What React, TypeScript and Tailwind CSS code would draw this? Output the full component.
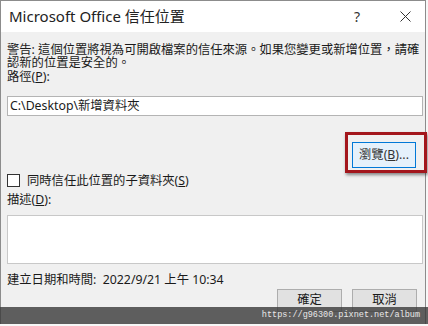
import React from "react";

const font = { fontFamily: '"Noto Sans", "Noto Sans CJK TC", sans-serif' };

export default function App() {
  return (
    <div className="relative h-[326px] w-[428px] overflow-hidden bg-[#f7f7f7]" style={font}>
      {/* dialog window */}
      <div className="flex h-[324px] w-[426px] flex-col border-x border-t border-[#8c8c8c] bg-[#f0f0f0] text-[12.3px] text-[#1a1a1a]">
        {/* title bar */}
        <div className="flex h-[31px] shrink-0 items-center bg-white pl-[8px]">
          <span className="text-[15px] text-[#222]">Microsoft Office 信任位置</span>
          <span className="ml-auto mr-[40px] text-[14px] text-[#333]">?</span>
          <svg className="mr-[14px]" width="11" height="11" viewBox="0 0 11 11">
            <path d="M0.5 0.5 L10.5 10.5 M10.5 0.5 L0.5 10.5" stroke="#333" strokeWidth="1" fill="none" />
          </svg>
        </div>

        {/* body */}
        <div className="flex flex-col px-[6px]">
          <p className="mt-[11px] whitespace-nowrap leading-[13px]">
            警告: 這個位置將視為可開啟檔案的信任來源。如果您變更或新增位置，請確
            <br />
            認新的位置是安全的。
          </p>
          <div className="leading-[15px]">
            路徑(<span className="underline">P</span>):
          </div>
          <div className="mt-[12px] flex h-[20px] w-[416px] items-center border border-[#b4b4b4] bg-white pl-[2px]">
            C:\Desktop\新增資料夾
          </div>

          <div className="mt-[26px] flex justify-end pr-[3px]">
            <div className="flex h-[26px] w-[64px] items-center justify-center border border-[#0078d7] bg-[#e5f1fb] text-[#333]">
              瀏覽(<span className="underline">B</span>)...
            </div>
          </div>

          <div className="mt-[6px] flex items-center">
            <div className="h-[13px] w-[13px] border border-[#333] bg-white" />
            <span className="ml-[7px] leading-[13px]">
              同時信任此位置的子資料夾(<span className="underline">S</span>)
            </span>
          </div>

          <div className="mt-[6px] leading-[14px]">
            描述(<span className="underline">D</span>):
          </div>
          <div className="mt-[8px] h-[49px] w-[416px] border border-[#c8c8c8] bg-white" />

          <div className="mt-[9px] leading-[14px]">
            建立日期和時間:&nbsp;&nbsp;2022/9/21 上午 10:34
          </div>

          <div className="mt-[2px] flex justify-end gap-[10px] pr-[2px]">
            <div className="flex h-[23px] w-[65px] items-center justify-center border border-[#adadad] bg-[#e1e1e1]">
              確定
            </div>
            <div className="flex h-[23px] w-[65px] items-center justify-center border border-[#adadad] bg-[#e1e1e1]">
              取消
            </div>
          </div>
        </div>
      </div>

      {/* red highlight annotation */}
      <div className="absolute left-[345px] top-[132px] h-[41px] w-[82px] border-[3px] border-[#a3161c] shadow-[1px_2px_3px_rgba(0,0,0,0.45)]" />

      {/* watermark bar */}
      <div className="absolute left-0 top-[307px] flex h-[17px] w-[428px] items-center justify-end bg-[#3a3a3a]/80 pr-[8px]">
        <span className="text-[8.5px] text-[#e8e8e8]" style={{ fontFamily: '"Liberation Mono", monospace' }}>
          https://g96300.pixnet.net/album
        </span>
      </div>
    </div>
  );
}
